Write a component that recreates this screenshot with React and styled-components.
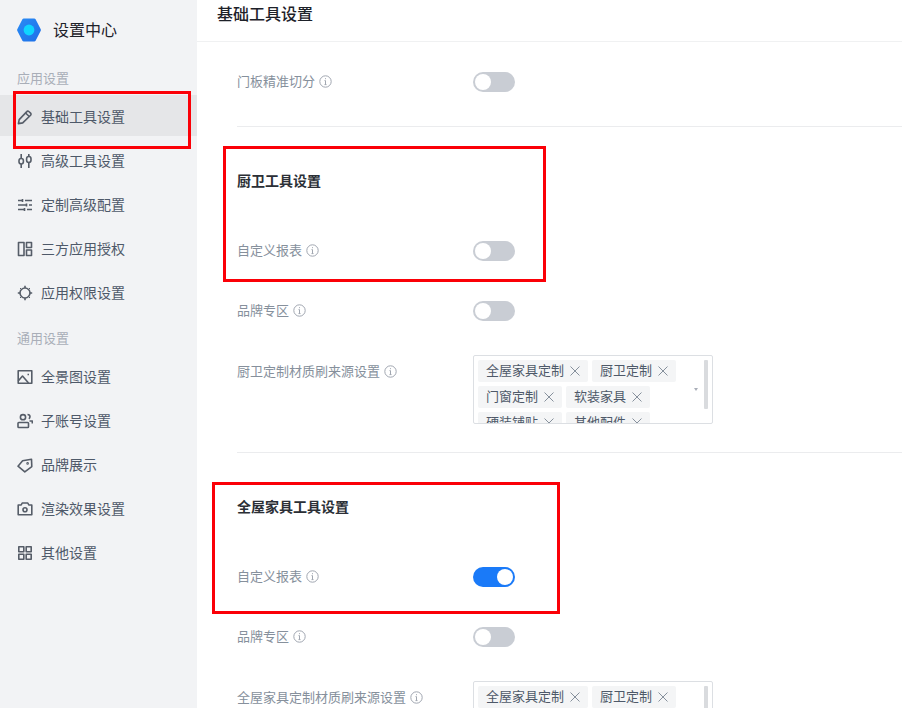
import React from 'react';
import styled, { createGlobalStyle } from 'styled-components';

const Global = createGlobalStyle`
  html, body { margin: 0; padding: 0; background: #fff; }
  body { font-family: "Noto Sans CJK SC", "Noto Sans", sans-serif; }
  * { box-sizing: border-box; }
`;

const Page = styled.div`
  position: relative;
  display: flex;
  width: 902px;
  height: 708px;
  overflow: hidden;
  background: #fff;
`;
const Sidebar = styled.aside`
  flex: 0 0 197px;
  background: #f2f3f5;
  display: flex;
  flex-direction: column;
`;
const Brand = styled.div`
  height: 60px;
  padding-left: 17px;
  display: flex;
  align-items: center;
  gap: 12px;
  font-size: 16px;
  color: #1d2129;
`;
const BrandName = styled.span`
  line-height: 20px;
  padding-bottom: 2px;
`;
const GroupLabel = styled.div`
  height: 20px;
  padding-left: 17px;
  margin-top: ${p => p.$top}px;
  margin-bottom: ${p => p.$bottom}px;
  font-size: 13px;
  line-height: 18px;
  color: #a9aeb8;
`;
const NavItem = styled.div`
  height: 41px;
  margin-bottom: 3px;
  padding: 3px 0 0 17px;
  display: flex;
  align-items: center;
  gap: 8px;
  font-size: 14px;
  color: #4e5969;
  background: ${p => (p.$active ? '#e5e6e8' : 'transparent')};
`;
const NavText = styled.span`
  line-height: 20px;
  padding-bottom: 2px;
`;
const Main = styled.main`
  flex: 1;
  min-width: 0;
`;
const Header = styled.header`
  height: 42px;
  padding: 2px 0 0 20px;
  border-bottom: 1px solid #f0f1f2;
  font-size: 16px;
  font-weight: 500;
  line-height: 22px;
  color: #1d2129;
`;
const Content = styled.div`
  padding: 30px 0 0 40px;
`;
const Row = styled.div`
  display: flex;
  align-items: ${p => (p.$top ? 'flex-start' : 'center')};
  min-height: 20px;
  margin-top: ${p => p.$gap || 0}px;
`;
const Label = styled.div`
  flex: 0 0 236px;
  display: flex;
  align-items: center;
  gap: 4px;
  font-size: 13px;
  line-height: 18px;
  color: #86909c;
  padding: ${p => (p.$pad ? '7px 0 0' : '0 0 2px')};
`;
const Track = styled.div`
  width: 42px;
  height: 20px;
  border-radius: 10px;
  padding: 2px;
  display: flex;
  justify-content: ${p => (p.$on ? 'flex-end' : 'flex-start')};
  background: ${p => (p.$on ? '#1a7af8' : '#c9cdd4')};
`;
const Knob = styled.div`
  width: 16px;
  height: 16px;
  border-radius: 50%;
  background: #fff;
`;
const Divider = styled.hr`
  margin: ${p => p.$top}px 0 42px;
  border: 0;
  border-top: 1px solid #ebecee;
`;
const SectionTitle = styled.div`
  font-size: 14px;
  font-weight: 700;
  line-height: 22px;
  color: #2b2f36;
`;
const Select = styled.div`
  position: relative;
  width: 240px;
  height: 69px;
  padding: 4px 0 0 4px;
  border: 1px solid #dcdfe3;
  border-radius: 2px;
  overflow: hidden;
  display: flex;
  flex-wrap: wrap;
  align-content: flex-start;
  gap: 4px;
`;
const Tag = styled.span`
  height: 22px;
  padding: 0 8px;
  display: inline-flex;
  align-items: center;
  gap: 6px;
  border-radius: 2px;
  background: #f4f5f6;
  font-size: 13px;
  color: #4e5969;
`;
const TagText = styled.span`
  line-height: 18px;
  padding-bottom: 2px;
`;
const Scrollbar = styled.div`
  position: absolute;
  right: 4px;
  top: 4px;
  width: 4px;
  height: 49px;
  border-radius: 1px;
  background: #d9dbde;
`;
const Caret = styled.div`
  position: absolute;
  right: 14px;
  top: 32px;
  border-left: 2.5px solid transparent;
  border-right: 2.5px solid transparent;
  border-top: 3.5px solid #a9aeb8;
`;
const RedBox = styled.div`
  position: absolute;
  left: ${p => p.$x}px;
  top: ${p => p.$y}px;
  width: ${p => p.$w}px;
  height: ${p => p.$h}px;
  border: 3px solid #fb0007;
  pointer-events: none;
`;

const Svg = ({ children }) => (
  <svg width="16" height="16" viewBox="0 0 16 16" fill="none" stroke="#565d68" strokeWidth="1.6" strokeLinejoin="round" style={{ flex: 'none' }}>
    {children}
  </svg>
);

const icons = {
  pencil: <><path d="M1.4 14.6l.8-4 7.6-8a1.4 1.4 0 0 1 2-.1l1.8 1.7a1.4 1.4 0 0 1 0 2l-7.9 7.7z" /><path d="M8.6 4l3.6 3.5" /></>,
  tune: <><path d="M4.2 1v4M4.2 11v4M11.8 1v2.5M11.8 9.5V15" /><rect x="2" y="5.5" width="4.4" height="5.5" rx="2.2" /><rect x="9.6" y="3.5" width="4.4" height="6" rx="2.2" /></>,
  sliders: <><path d="M1 3.5h4M8 3.5h7M1 8h8M12 8h3M1 12.5h6M10 12.5h5" /><path d="M5.5 2v3M9.5 6.5v3M7.5 11v3" /></>,
  layout: <><rect x="1.5" y="1.5" width="5.5" height="13" /><rect x="9.5" y="1.5" width="5" height="5" /><rect x="9.5" y="9" width="5" height="5.5" /></>,
  gear: <><circle cx="8" cy="8" r="5" /><path d="M8 .8v2.2M8 13v2.2M.8 8H3M13 8h2.2" /><path d="M3 3l1.2 1.2M13 3l-1.2 1.2M3 13l1.2-1.2M13 13l-1.2-1.2" strokeWidth="1" /></>,
  image: <><rect x="1.2" y="1.8" width="13.6" height="12.4" /><path d="M1.2 12l4.3-5 6 7" /><path d="M10.5 5.5h1.5" /></>,
  user: <><circle cx="6" cy="4.2" r="2.6" /><rect x="1" y="9.5" width="10.5" height="5" rx=".8" /><path d="M10.5 1.5c1.5 0 2.5 1 2.5 2.3 0 .9-.5 1.6-1.2 2M12.5 8h2.8v2.5" /></>,
  tag: <><path d="M1 9.2l4.6-5.4 8.9-1.6.3 7.4-7 5.3z" /><circle cx="10.6" cy="6.4" r=".5" /></>,
  camera: <><path d="M1.2 4h3l1-2h5.6l1 2h3v9.8H1.2z" /><circle cx="8" cy="8.7" r="2" /></>,
  grid: <><rect x="1.8" y="1.8" width="5" height="5" /><rect x="9.2" y="1.8" width="5" height="5" /><rect x="1.8" y="9.2" width="5" height="5" /><rect x="9.2" y="9.2" width="5" height="5" /></>,
};

const Logo = () => (
  <svg width="24" height="24" viewBox="0 0 24 24" style={{ flex: 'none' }}>
    <defs>
      <linearGradient id="hex" x1="0" y1="0" x2="1" y2="1">
        <stop offset="0" stopColor="#2a8cf5" />
        <stop offset="1" stopColor="#1d6fe8" />
      </linearGradient>
    </defs>
    <path d="M6.8.5h10.4a1.6 1.6 0 0 1 1.4.8l5 9.6a2.4 2.4 0 0 1 0 2.2l-5 9.6a1.6 1.6 0 0 1-1.4.8H6.8a1.6 1.6 0 0 1-1.4-.8l-5-9.6a2.4 2.4 0 0 1 0-2.2l5-9.6a1.6 1.6 0 0 1 1.4-.8z" fill="url(#hex)" />
    <circle cx="12" cy="12" r="5.4" fill="#0fd5ff" />
  </svg>
);

const Info = () => (
  <svg width="13" height="13" viewBox="0 0 13 13" fill="none" stroke="#a0a6b0" strokeWidth="1" style={{ flex: 'none' }}>
    <circle cx="6.5" cy="6.5" r="5.7" />
    <path d="M6.5 5.6v4M5.5 5.6h1M5.5 9.6h2M6.5 3.2v1" />
  </svg>
);

const Close = () => (
  <svg width="10" height="10" viewBox="0 0 10 10" stroke="#86909c" strokeWidth="1" style={{ flex: 'none' }}>
    <path d="M.5.5l9 9M9.5.5l-9 9" />
  </svg>
);

const Nav = ({ icon, text, active }) => (
  <NavItem $active={active}>
    <Svg>{icons[icon]}</Svg>
    <NavText>{text}</NavText>
  </NavItem>
);

const Switch = ({ on }) => (
  <Track $on={on}>
    <Knob />
  </Track>
);

const Setting = ({ label, on, gap }) => (
  <Row $gap={gap}>
    <Label>
      {label}
      <Info />
    </Label>
    <Switch on={on} />
  </Row>
);

const TAGS = ['全屋家具定制', '厨卫定制', '门窗定制', '软装家具', '硬装铺贴', '其他配件'];

const SourceSelect = ({ label }) => (
  <Row $top $gap={34}>
    <Label $pad>
      {label}
      <Info />
    </Label>
    <Select>
      {TAGS.map(t => (
        <Tag key={t}>
          <TagText>{t}</TagText>
          <Close />
        </Tag>
      ))}
      <Caret />
      <Scrollbar />
    </Select>
  </Row>
);

export default function App() {
  return (
    <Page>
      <Global />
      <Sidebar>
        <Brand>
          <Logo />
          <BrandName>设置中心</BrandName>
        </Brand>
        <GroupLabel $top={9} $bottom={6}>应用设置</GroupLabel>
        <Nav icon="pencil" text="基础工具设置" active />
        <Nav icon="tune" text="高级工具设置" />
        <Nav icon="sliders" text="定制高级配置" />
        <Nav icon="layout" text="三方应用授权" />
        <Nav icon="gear" text="应用权限设置" />
        <GroupLabel $top={14} $bottom={6}>通用设置</GroupLabel>
        <Nav icon="image" text="全景图设置" />
        <Nav icon="user" text="子账号设置" />
        <Nav icon="tag" text="品牌展示" />
        <Nav icon="camera" text="渲染效果设置" />
        <Nav icon="grid" text="其他设置" />
      </Sidebar>
      <Main>
        <Header>基础工具设置</Header>
        <Content>
          <Setting label="门板精准切分" />
          <Divider $top={34} />
          <SectionTitle>厨卫工具设置</SectionTitle>
          <Setting label="自定义报表" gap={50} />
          <Setting label="品牌专区" gap={40} />
          <SourceSelect label="厨卫定制材质刷来源设置" />
          <Divider $top={28} />
          <SectionTitle>全屋家具工具设置</SectionTitle>
          <Setting label="自定义报表" on gap={50} />
          <Setting label="品牌专区" gap={40} />
          <SourceSelect label="全屋家具定制材质刷来源设置" />
        </Content>
      </Main>
      <RedBox $x={13} $y={91} $w={178} $h={58} />
      <RedBox $x={223} $y={146} $w={323} $h={136} />
      <RedBox $x={212} $y={482} $w={348} $h={132} />
    </Page>
  );
}
